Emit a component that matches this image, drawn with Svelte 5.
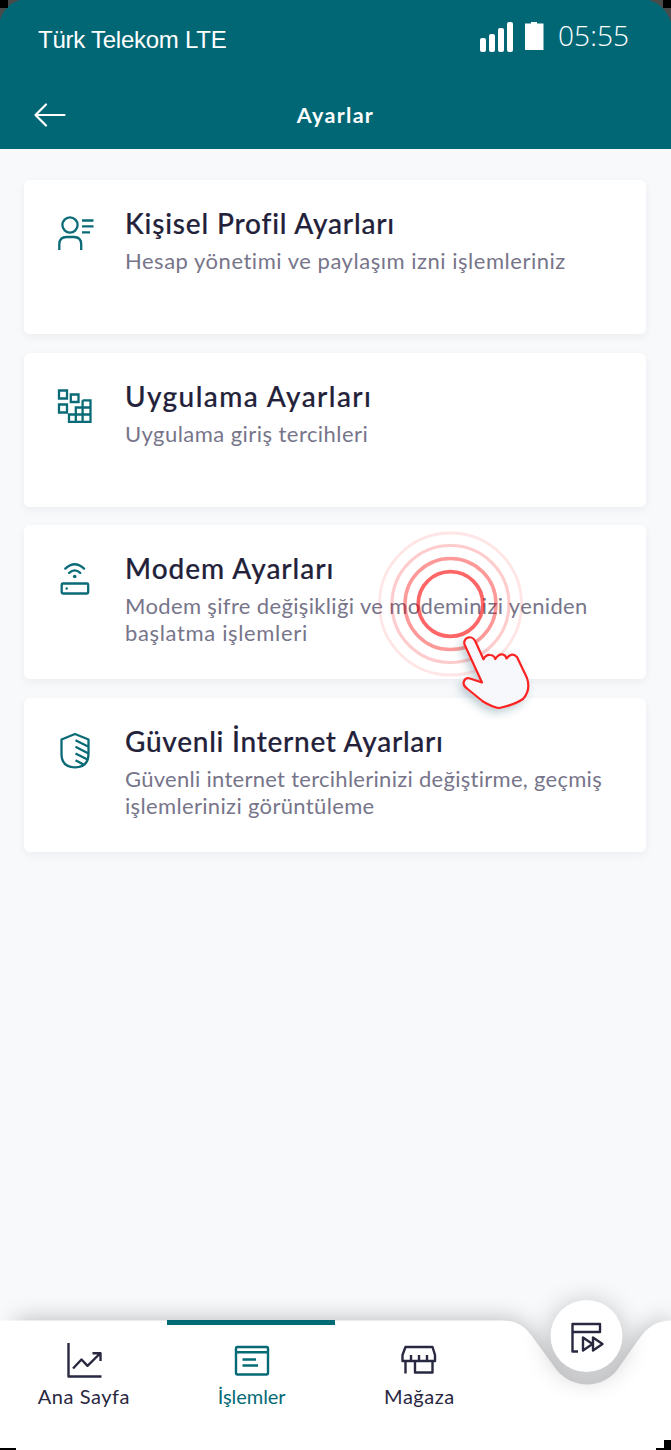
<script>
  const cards = [
    { icon: 'profile', title: 'Kişisel Profil Ayarları', ts: 0.83, lines: [['Hesap yönetimi ve paylaşım izni işlemleriniz', 0.52]] },
    { icon: 'apps', title: 'Uygulama Ayarları', ts: 1.43, lines: [['Uygulama giriş tercihleri', 0.45]] },
    { icon: 'modem', title: 'Modem Ayarları', ts: 0.98, lines: [['Modem şifre değişikliği ve modeminizi yeniden', 0.35], ['başlatma işlemleri', 0.65]] },
    { icon: 'shield', title: 'Güvenli İnternet Ayarları', ts: 0.74, lines: [['Güvenli internet tercihlerinizi değiştirme, geçmiş', 0.28], ['işlemlerinizi görüntüleme', 0.34]] }
  ];
  const tabs = [
    { icon: 'chart', label: 'Ana Sayfa', ls: 0.55 },
    { icon: 'list', label: 'İşlemler', ls: -0.05, active: true },
    { icon: 'store', label: 'Mağaza', ls: 0.5 }
  ];
</script>

<div class="screen">
  <svg class="corner left" width="22" height="22" viewBox="0 0 22 22"><path d="M0 0H20Q5 4 0 20Z" fill="#4b4b4b" /><path d="M0 0H8V8H0Z" fill="#000" /></svg>
  <svg class="corner right" width="24" height="22" viewBox="0 0 24 22"><path d="M24 0H2Q18 5 24 22Z" fill="#4b4b4b" /><path d="M16 0H24V8H16Z" fill="#000" /></svg>
  <header>
    <div class="status">
      <span class="carrier">Türk Telekom LTE</span>
      <svg class="signal" width="64" height="32" viewBox="0 0 64 32" fill="#fff">
        <rect x="0" y="16" width="6" height="14" rx="2" /><rect x="9" y="12" width="6" height="18" rx="2" />
        <rect x="18" y="6" width="6" height="24" rx="2" /><rect x="27" y="0" width="6" height="30" rx="2" />
        <path d="M45 1.500H51V0H57V1.500H63.500V28H45Z" />
      </svg>
      <time>05:55</time>
    </div>
    <div class="bar">
      <svg class="back" width="32" height="24" viewBox="0 0 32 24" fill="none" stroke="#fff" stroke-width="2.2" stroke-linecap="round" stroke-linejoin="round"><path d="M12 1.500 1.500 12 12 22.500M1.500 12H30.500" /></svg>
      <h1>Ayarlar</h1>
    </div>
  </header>

  <main>
    {#each cards as card}
      <section class="card">
        <svg class="icon" width="40" height="40" viewBox="0 0 40 40" fill="none" stroke="#0a6b77" stroke-width="2.3">
          {#if card.icon === 'profile'}
            <circle cx="15" cy="11" r="7.600" /><path d="M4.300 36V30.500Q4.300 23 11.500 23H19Q26.200 23 26.200 30.500V36M27 6.500H38.500M27 12.400H38.500M27 18.400H35" />
          {:else if card.icon === 'apps'}
            <path transform="translate(0 -2.500)" d="M4 6H12V14H4ZM15.800 10H23.500V17.500H15.800ZM4 20H12V28H4ZM27.600 15.800H35.500V37.400H14V30H35.500M35.500 23H20.800V37.400M27.600 15.800V37.400" />
          {:else if card.icon === 'modem'}
            <g transform="translate(-.3 -.5)">
              <path d="M10.600 10.100Q20 1.300 29.400 10.100M14.500 14.400Q20 9.300 25.500 14.400" stroke-linecap="round" />
              <circle cx="20" cy="18" r="1.800" fill="#0a6b77" stroke="none" /><rect x="7" y="25" width="26.500" height="10" rx="1.300" /><circle cx="12" cy="30" r="1.200" fill="#0a6b77" stroke="none" />
            </g>
          {:else}
            <g transform="translate(0 -2.500)">
              <path d="M20 4.500 33.500 10V24Q33.500 37.800 20 37.800Q6.500 37.800 6.500 24V10Z" stroke-linejoin="round" />
              <path d="M20.500 10.800 33 17M20.500 17.300 33 23.700M20.500 24 32.500 30M20.500 30.700 28.500 35" />
            </g>
          {/if}
        </svg>
        <div class="copy">
          <h2><span style="letter-spacing:{card.ts}px">{card.title}</span></h2>
          {#each card.lines as [text, ls]}<p><span style="letter-spacing:{ls}px">{text}</span></p>{/each}
        </div>
      </section>
    {/each}
  </main>

  <svg class="touch" width="170" height="200" viewBox="370 520 170 200" fill="none">
    <defs><filter id="handShadow" x="-30%" y="-30%" width="160%" height="160%"><feDropShadow dx="-3" dy="4" stdDeviation="4" flood-color="#2d5870" flood-opacity=".3" /></filter></defs>
    <g stroke="#fb0000">
      <circle cx="450.500" cy="604" r="71" stroke-width="2.800" opacity=".1" /><circle cx="450.500" cy="604" r="58.500" stroke-width="3.200" opacity=".2" />
      <circle cx="450.500" cy="604" r="45.500" stroke-width="3.500" opacity=".4" /><circle cx="450.500" cy="604" r="32.300" stroke-width="3.700" opacity=".6" />
    </g>
    <path d="M465 645.500C461.500 638.500 471.500 633.500 475.300 641.300L483.500 659.300Q486 654.500 490 655Q494 655 495.200 659Q499 653.500 503 654.500Q506 655.500 506.500 658.500Q512 651.500 517 657L527 678Q531 690 523 699Q514 705 499.500 708Q494 708 483 701.500L467 688.500C460.500 684 464.500 677 470 678.500L482 682.500Z" fill="#f7f8fc" stroke="#fb2424" stroke-width="2.200" stroke-linejoin="round" filter="url(#handShadow)" />
  </svg>

  <nav>
    <svg class="surface" width="671" height="190" viewBox="0 1260 671 190">
      <defs>
        <filter id="navShadow" x="-5%" y="-40%" width="110%" height="180%"><feGaussianBlur stdDeviation="12" /></filter>
        <filter id="soft" x="-80%" y="-80%" width="260%" height="260%"><feGaussianBlur stdDeviation="13" /></filter>
      </defs>
      <path d="M16 1320.500H503C522 1320.500 529 1332 537 1343L556 1369C572 1390 603 1389 617 1370L636 1343C644 1332 652 1320.500 671 1320.500V1450H16Z" fill="#000" opacity=".27" filter="url(#navShadow)" />
      <path d="M0 1320.500H503C522 1320.500 529 1332 537 1343L556 1369C572 1389.500 602 1389.500 617 1370L636 1343C644 1332 652 1320.500 671 1320.500V1450H0Z" fill="#fff" />
      <circle cx="586.500" cy="1340" r="39" fill="#000" opacity=".2" filter="url(#soft)" />
      <circle cx="586.500" cy="1336" r="36" fill="#fff" />
      <path d="M0 1448H16V1450H0ZM664 1440H671V1450H656V1448H664Z" fill="#000" />
    </svg>
    {#each tabs as tab}
      <div class="tab" class:active={tab.active}>
        <svg width="40" height="40" viewBox="0 0 40 40" fill="none" stroke="currentColor" stroke-width="2.400" stroke-linejoin="round">
          {#if tab.icon === 'chart'}
            <path d="M4.500 3V36.500H37.500M9 28.500 17.500 19.500 23.500 25.800 36 13.500M28.500 13.200H36.500V21" />
          {:else if tab.icon === 'list'}
            <rect x="4" y="7" width="32" height="27.500" rx="1.500" /><path d="M4 12.300H36M10.500 19.500H24M10.500 25.500H26" />
          {:else}
            <path d="M6.500 7H33.500L36 15V21H3.500V15ZM6.500 21V33.500M16 21V32.500H33.500V21M12 15V21M20 15V21M28 15V21" />
          {/if}
        </svg>
        <span style="letter-spacing:{tab.ls}px">{tab.label}</span>
      </div>
    {/each}
    <div class="quick">
      <svg width="40" height="40" viewBox="0 0 40 40" fill="none" stroke="#292841" stroke-width="2.400" stroke-linejoin="round"><path d="M12 34.500H6.500V7H34V15H6.500M17 20.500V33.500L26.500 27ZM27 20.500V33.500L36.500 27Z" /></svg>
    </div>
  </nav>
</div>

<style>
  :global(body) { margin: 0; }
  .screen { width: 671px; height: 1450px; position: relative; overflow: hidden; display: flex; flex-direction: column; background: #f8f9fb; font-family: Lato, sans-serif; color: #222139; }
  .corner { position: absolute; top: 0; z-index: 2; }
  .left { left: 0; }
  .right { right: 0; }
  header { height: 149px; background: #026775; color: #fff; flex: none; }
  .status { height: 81px; display: flex; align-items: flex-start; padding: 0 38px; box-sizing: border-box; }
  .carrier { font: 24px/30px "Liberation Sans", sans-serif; letter-spacing: -.25px; padding-top: 25px; width: 442px; white-space: nowrap; }
  .signal { margin-top: 22px; flex: none; }
  time { font: 300 28px/34px "Open Sans", sans-serif; margin: 18px 0 0 14px; letter-spacing: .1px; white-space: nowrap; }
  .bar { height: 68px; display: grid; grid-template-columns: 64px 1fr 64px; align-items: center; }
  .back { margin-left: 34px; }
  h1 { font-size: 21.500px; line-height: 28px; font-weight: 700; margin: -1px 0 0; text-align: center; letter-spacing: 1.300px; }
  main { padding: 31px 25px 0 24px; display: flex; flex-direction: column; gap: 18.600px; }
  .card { height: 154px; box-sizing: border-box; flex: none; background: #fff; border-radius: 6px; box-shadow: 0 3px 8px rgba(30,35,50,.055); display: flex; padding: 26px 20px 0 31px; }
  .icon { margin-top: 8px; flex: none; }
  .copy { margin: -1px 0 0 30px; white-space: nowrap; }
  h2 { margin: 0 0 6px; font-size: 28px; line-height: 36px; font-weight: 500; -webkit-text-stroke: .2px currentColor; }
  p { margin: 0; font-size: 22px; line-height: 27px; color: #77758a; }
  .touch { position: absolute; left: 370px; top: 520px; }
  nav { position: absolute; inset: 1320px 0 0; display: grid; grid-template-columns: repeat(4, 1fr); }
  .surface { position: absolute; left: 0; top: -60px; }
  .tab { position: relative; display: flex; flex-direction: column; align-items: center; padding-top: 20px; height: 90px; color: #292841; font-size: 20px; line-height: 26px; }
  .tab span { margin-top: 3px; }
  .tab.active { color: #066a76; }
  .tab.active::before { content: ""; position: absolute; top: 0; left: -1px; width: 168px; height: 5px; background: #026a75; }
  .quick { position: relative; display: flex; justify-content: center; margin-top: -3px; height: 40px; padding-right: 2px; }
</style>
